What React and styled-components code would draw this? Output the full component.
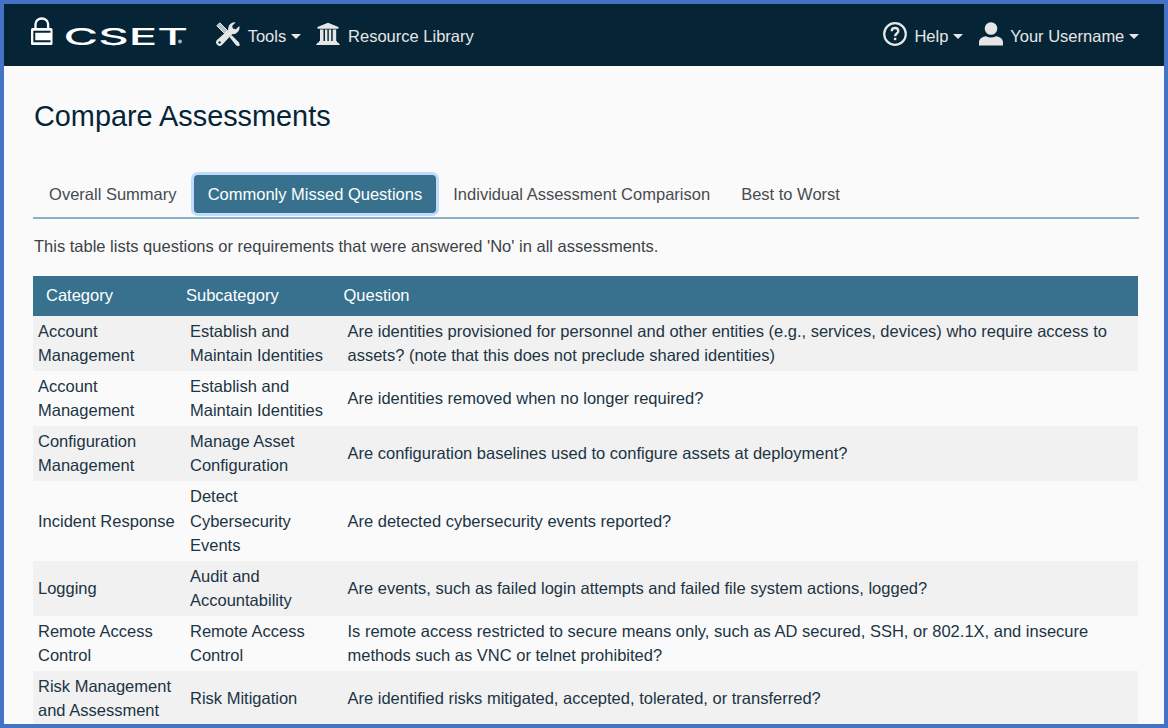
import React from "react";
import styled, { createGlobalStyle } from "styled-components";

const GlobalStyle = createGlobalStyle`
  *, *::before, *::after { box-sizing: border-box; }
  body { margin: 0; background: #fafafa; font-family: "Liberation Sans", Arial, sans-serif; }
`;

const Frame = styled.div`
  width: 1168px;
  height: 728px;
  border: 4px solid #4472c4;
  background: #fafafa;
  color: #1c3444;
  font-size: 16.515px;
  line-height: 24.2px;
  overflow: hidden;
`;

const Navbar = styled.header`
  display: flex;
  align-items: center;
  justify-content: space-between;
  height: 62px;
  padding: 0 25px 0 25px;
  background: #052536;
  color: #e6e6e6;
`;

const NavGroup = styled.div`
  display: flex;
  align-items: center;
  gap: 15.500px;
`;

const Brand = styled.a`
  display: flex;
  margin: 0 9.500px 0 0;
`;

const NavItem = styled.a`
  display: flex;
  align-items: center;
  gap: 7.700px;
  white-space: nowrap;

  > svg { flex: none; margin-top: -1px; }
`;

const NavLabel = styled.span`
  padding-top: 2px;
`;

const Caret = styled.span`
  width: 0;
  height: 0;
  margin: 3px 0 0 -3px;
  border: 5px solid transparent;
  border-top-color: currentColor;
  border-bottom: 0;
`;

const Content = styled.main`
  display: flex;
  flex-direction: column;
  padding: 31px 25px 0 29px;
`;

const Title = styled.h1`
  margin: 0 0 36px 1px;
  font-size: 28.85px;
  line-height: 38px;
  font-weight: 400;
  color: #052536;
`;

const Tabs = styled.nav`
  display: flex;
  height: 48px;
  margin-bottom: 15px;
  padding: 4px 0 4px 2.5px;
  border-bottom: 2px solid #8bb1c4;
`;

const Tab = styled.button`
  height: 38px;
  margin-right: 3.9px;
  padding: 0 13.600px;
  border: 0;
  border-radius: 4px;
  background: ${(p) => (p.$active ? "#37718e" : "transparent")};
  box-shadow: ${(p) => (p.$active ? "0 0 0 3px #bfdcfb" : "none")};
  color: ${(p) => (p.$active ? "#ffffff" : "#484b4e")};
  font: inherit;
  white-space: nowrap;
`;

const Intro = styled.p`
  margin: 0 0 18px 1px;
  color: #3c4247;
`;

const Table = styled.table`
  width: 1105px;
  border-collapse: collapse;
  table-layout: fixed;
`;

const HeadCell = styled.th`
  width: ${(p) => p.$width}px;
  height: 39.4px;
  padding: 0 0 1.2px ${(p) => p.$indent}px;
  background: #37718e;
  color: #ffffff;
  font-weight: 400;
  text-align: left;
`;

const Row = styled.tr`
  &:nth-child(odd) { background: #f1f1f1; }
`;

const Cell = styled.td`
  padding: 3.2px 5px 3.6px;
  vertical-align: middle;
`;

function Logo() {
  return (
    <svg width="162" height="48" viewBox="29 11 162 48" role="img" aria-label="CSET">
      <path d="M35.500 29v-5a6.300 5.500 0 0 1 12.600 0v5" fill="none" stroke="#fff" strokeWidth="2.300" />
      <rect x="31" y="28" width="21.500" height="17" rx="1.500" fill="#fff" />
      <path d="M50.500 31.800H34.300V41.300H50.500" fill="none" stroke="#052536" strokeWidth="1.900" />
      <text x="63.500" y="44.500" textLength="124.500" lengthAdjust="spacingAndGlyphs" fill="#fff" fontFamily="Inter, sans-serif" fontWeight="500" fontSize="23.300">CSET</text>
      <circle cx="180" cy="41.500" r="1.900" fill="#aab5bb" />
    </svg>
  );
}

function ToolsIcon() {
  return (
    <svg width="24" height="24" viewBox="0 0 24 24" fill="currentColor">
      <path d="M.8 3.800 3.800.8 11.500 8.500 8.500 11.500z" fill="#b7bfc4" stroke="currentColor" strokeLinejoin="round" />
      <path d="m13.500 15 2-2 7.500 7.600.8 2.600-1 1-2.600-.8z" />
      <path d="M23.300 3.900 19.800 7.200 16.800 6.600 16.200 3.800 19.600.4A6.500 6.500 0 0 0 12.200 7.900L1.200 17.800a3.400 3.400 0 1 0 5 5L16.300 12.100A6.500 6.500 0 0 0 23.300 3.900z" />
      <circle cx="3.600" cy="20.400" r="1.200" fill="#052536" />
    </svg>
  );
}

function LibraryIcon() {
  return (
    <svg width="24" height="24" viewBox="0 0 24 24" fill="currentColor">
      <path d="M12 .8 1.500 5V6.800h21V5z" />
      <path d="M4 7.500h3.500v12H4zM9 7.500h2.400v12H9zM12.800 7.500h2.400v12h-2.400zM16.700 7.500h3.500v12h-3.500z" />
      <path d="M3 19h18v1.500h1.300L24 23H0l1.700-2.500H3z" />
    </svg>
  );
}

function HelpIcon() {
  return (
    <svg width="24" height="24" viewBox="0 0 24 24" fill="none" stroke="currentColor">
      <circle cx="12" cy="12" r="10.800" strokeWidth="2.200" />
      <path d="M8.700 9.200c0-2 1.400-3.200 3.300-3.200s3.300 1.200 3.300 3c0 2.500-3.200 2.500-3.200 5.200" strokeWidth="2.300" />
      <path d="M12.100 15.800v2.400" strokeWidth="2.400" />
    </svg>
  );
}

function UserIcon() {
  return (
    <svg width="24" height="24" viewBox="0 0 24 24" fill="currentColor">
      <circle cx="12" cy="6.500" r="6.300" />
      <path d="M0 23.500v-3c0-3.500 3-5.800 7-6.200 3 1.700 7 1.700 10 0 4 .4 7 2.700 7 6.200v3z" />
    </svg>
  );
}

const tabs = ["Overall Summary", "Commonly Missed Questions", "Individual Assessment Comparison", "Best to Worst"];

const rows = [
  ["Account Management", "Establish and Maintain Identities", "Are identities provisioned for personnel and other entities (e.g., services, devices) who require access to assets? (note that this does not preclude shared identities)"],
  ["Account Management", "Establish and Maintain Identities", "Are identities removed when no longer required?"],
  ["Configuration Management", "Manage Asset Configuration", "Are configuration baselines used to configure assets at deployment?"],
  ["Incident Response", "Detect Cybersecurity Events", "Are detected cybersecurity events reported?"],
  ["Logging", "Audit and Accountability", "Are events, such as failed login attempts and failed file system actions, logged?"],
  ["Remote Access Control", "Remote Access Control", "Is remote access restricted to secure means only, such as AD secured, SSH, or 802.1X, and insecure methods such as VNC or telnet prohibited?"],
  ["Risk Management and Assessment", "Risk Mitigation", "Are identified risks mitigated, accepted, tolerated, or transferred?"],
];

export default function App() {
  return (
    <Frame>
      <GlobalStyle />
      <Navbar>
        <NavGroup>
          <Brand><Logo /></Brand>
          <NavItem><ToolsIcon /><NavLabel>Tools</NavLabel><Caret /></NavItem>
          <NavItem><LibraryIcon /><NavLabel>Resource Library</NavLabel></NavItem>
        </NavGroup>
        <NavGroup>
          <NavItem><HelpIcon /><NavLabel>Help</NavLabel><Caret /></NavItem>
          <NavItem><UserIcon /><NavLabel>Your Username</NavLabel><Caret /></NavItem>
        </NavGroup>
      </Navbar>
      <Content>
        <Title>Compare Assessments</Title>
        <Tabs>
          {tabs.map((label, i) => <Tab key={label} $active={i === 1}>{label}</Tab>)}
        </Tabs>
        <Intro>This table lists questions or requirements that were answered 'No' in all assessments.</Intro>
        <Table>
          <thead>
            <tr>
              <HeadCell $width={152} $indent={13}>Category</HeadCell>
              <HeadCell $width={157.500} $indent={1}>Subcategory</HeadCell>
              <HeadCell $indent={1}>Question</HeadCell>
            </tr>
          </thead>
          <tbody>
            {rows.map((cells, i) => (
              <Row key={i}>{cells.map((text, j) => <Cell key={j}>{text}</Cell>)}</Row>
            ))}
          </tbody>
        </Table>
      </Content>
    </Frame>
  );
}
